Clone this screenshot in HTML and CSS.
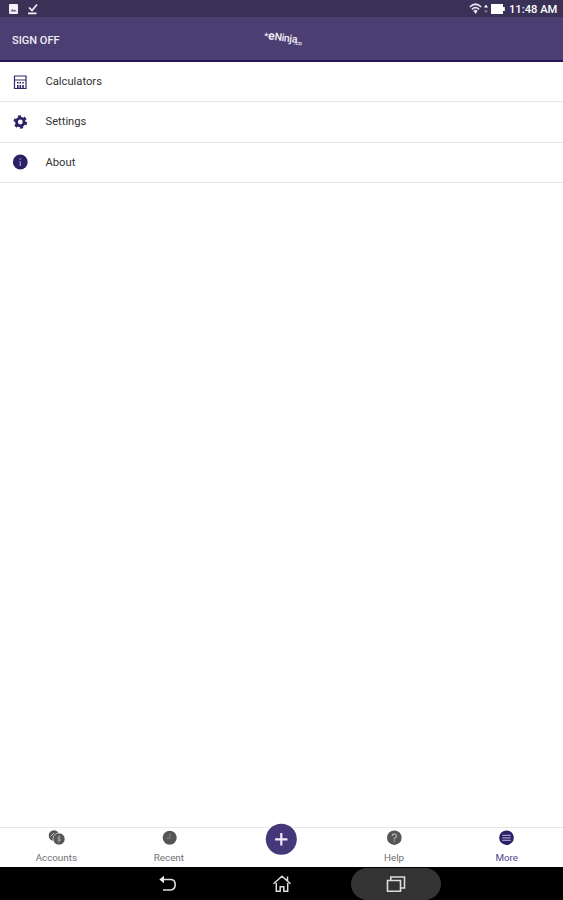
FILE: index.html
```
<!DOCTYPE html>
<html lang="en">
<head>
    <meta charset="UTF-8">
    <meta name="viewport" content="width=device-width, initial-scale=1.0">
    <title>More</title>
    <link rel="stylesheet" href="styles.css">
</head>
<body>
    <div class="status-bar">
        <svg class="status-left" width="30" height="17" viewBox="0 0 30 17">
            <rect x="0" y="4" width="9" height="10" rx="1" fill="#f4f1f8"/>
            <path d="M1.500 11.500l2-2.500 1.500 1.500 1-1 1.800 2z" fill="#6a6088"/>
            <path d="M20 7.500l3 3 5-6M19 13.300h8.500" fill="none" stroke="#f4f1f8" stroke-width="1.700"/>
        </svg>
        <div class="status-right">
            <svg width="37" height="17" viewBox="0 0 37 17">
                <path d="M.8 7Q6.500 1.500 12.200 7M2.900 9.300Q6.500 6 10.100 9.300" fill="none" stroke="#e5e0ee" stroke-width="1.700"/>
                <path d="M4.300 10.700Q6.500 9 8.700 10.700L6.500 14z" fill="#e5e0ee"/>
                <path d="M15 7.500l2-3 2 3z" fill="#fff"/>
                <path d="M15.300 10.500l1.700 2.500 1.700-2.500z" fill="#8d84a5"/>
                <path d="M22 4h12v3h1.800v4H34v3H22z" fill="#fff"/>
            </svg>
            <span class="clock">11:48 AM</span>
        </div>
    </div>

    <header class="header">
        <a class="sign-off">SIGN OFF</a>
        <div class="logo">
            <span class="logo-mark">*</span><span class="logo-e">e</span><span class="logo-name">Ninja</span><span class="logo-small">.co</span>
        </div>
    </header>

    <main class="menu">
        <a class="menu-item">
            <svg width="16" height="16" viewBox="0 0 16 16">
                <path d="M2.500 2h11.500v12.500h-11.500zM2.500 6h11.500" fill="none" stroke="#32286a" stroke-width="1.200"/>
                <path d="M5 8h1.600v1.600H5zM7.500 8h1.600v1.600H7.500zM10.200 8h1.600v1.600h-1.600zM5 11h1.600v3H5zM7.500 11h1.600v3H7.500zM10.200 11h1.600v3h-1.600z" fill="#32286a"/>
            </svg>
            <span>Calculators</span>
        </a>
        <a class="menu-item">
            <svg width="16" height="16" viewBox="0 0 16 16">
                <circle cx="8.300" cy="8" r="3.800" fill="none" stroke="#2c2066" stroke-width="2.800"/>
                <circle cx="8.300" cy="8" r="5.700" fill="none" stroke="#2c2066" stroke-width="2.200" stroke-dasharray="2.980 2.980"/>
            </svg>
            <span>Settings</span>
        </a>
        <a class="menu-item">
            <svg width="16" height="16" viewBox="0 0 16 16">
                <circle cx="8.300" cy="8" r="7.400" fill="#2c2066"/>
                <path d="M8.300 4.300v1.500M8.300 7v5" stroke="#8f88b4" stroke-width="1.400"/>
            </svg>
            <span>About</span>
        </a>
    </main>

    <nav class="tabs">
        <a class="tab">
            <svg width="18" height="16" viewBox="0 0 18 16">
                <circle cx="7" cy="5.500" r="5.300" fill="#555"/>
                <path d="M3.500 6.500L7 3" stroke="#ccc" stroke-width="1"/>
                <circle cx="12" cy="9" r="6" fill="#555" stroke="#fff" stroke-width=".6"/>
                <path d="M12 5.500v7M13.600 7.200Q10.500 6.500 10.700 8.200T13.200 9.800 10.500 11" fill="none" stroke="#aaa" stroke-width=".9"/>
            </svg>
            <span>Accounts</span>
        </a>
        <a class="tab">
            <svg width="16" height="16" viewBox="0 0 16 16">
                <circle cx="8.700" cy="7.700" r="7" fill="#555"/>
                <path d="M8.900 3.800v4.400H5.200" fill="none" stroke="#808080" stroke-width="1.100"/>
            </svg>
            <span>Recent</span>
        </a>
        <a class="tab tab-add">
            <svg width="34" height="34" viewBox="0 0 34 34">
                <circle cx="17" cy="17" r="16.800" fill="#fff"/>
                <circle cx="17.300" cy="17.300" r="15.500" fill="#44377a"/>
                <path d="M17.300 11.100v12.400M11.100 17.300h12.400" stroke="#eeeaf5" stroke-width="2.200"/>
            </svg>
        </a>
        <a class="tab">
            <svg width="16" height="16" viewBox="0 0 16 16">
                <circle cx="8.300" cy="7.700" r="7.300" fill="#555"/>
                <path d="M6.200 6Q6.300 3.900 8.300 3.900T10.500 5.900Q10.500 7 8.300 8.500v1M8.300 10.600v1.300" fill="none" stroke="#b4b4b4" stroke-width="1.200"/>
            </svg>
            <span>Help</span>
        </a>
        <a class="tab active">
            <svg width="16" height="16" viewBox="0 0 16 16">
                <circle cx="7.500" cy="7.700" r="7.300" fill="#2c2069"/>
                <path d="M3.300 5.300h8.400M3.300 7.800h8.400M3.300 10.300h8.400" stroke="#a09ac4" stroke-width="1.300"/>
            </svg>
            <span>More</span>
        </a>
    </nav>

    <footer class="system-nav">
        <div class="system-btn">
            <svg width="20" height="20" viewBox="0 0 20 20">
                <path d="M3 5.500h9.500q4.700 0 4.700 5t-4.700 5.500H5" fill="none" stroke="#ddd" stroke-width="1.600"/>
                <path d="M1.300 5.500L6 1.800v7.400z" fill="#eee"/>
            </svg>
        </div>
        <div class="system-btn">
            <svg width="20" height="20" viewBox="0 0 20 20">
                <path d="M1.500 9.800L10 2.300l8.500 7.500M4.300 9v8.300h3.900v-4.500h3.600v4.500h3.900V9M15.500 7V2.500" fill="none" stroke="#ddd" stroke-width="1.500"/>
            </svg>
        </div>
        <div class="system-btn pressed">
            <svg width="20" height="20" viewBox="0 0 20 20">
                <path d="M1.500 6.500h13v10.700h-13zM4.800 6V3h13.700v11H15" fill="none" stroke="#ddd" stroke-width="1.600"/>
            </svg>
        </div>
    </footer>
</body>
</html>
```
FILE: styles.css
```
* {
    box-sizing: border-box;
}
body {
    margin: 0;
    height: 900px;
    display: flex;
    flex-direction: column;
    font-family: Roboto, Arial, sans-serif;
    background-color: #fff;
    overflow: hidden;
}
svg {
    display: block;
    flex-shrink: 0;
}

/* Status bar */
.status-bar {
    height: 17px;
    padding: 0 5px 0 9px;
    display: flex;
    justify-content: space-between;
    background-color: #3a3157;
    color: #fff;
}
.status-right {
    display: flex;
    gap: 3px;
}
.clock {
    font-size: 11.2px;
    font-weight: 500;
    line-height: 19px;
    width: 49px;
    white-space: nowrap;
}

/* Header */
.header {
    height: 45px;
    padding: 0 12px;
    display: grid;
    grid-template-columns: 1fr auto 1fr;
    align-items: center;
    background-color: #4b3e73;
    border-bottom: 2px solid #271457;
    color: #f0edf5;
}
.sign-off {
    font-size: 11px;
    font-weight: 500;
    padding-top: 4px;
}
.logo {
    display: flex;
    align-items: baseline;
    width: 36px;
    height: 18px;
    margin-top: -4px;
    font-weight: 500;
    line-height: 18px;
    transform: rotate(7deg);
}
.logo-mark {
    font-size: 9px;
    font-weight: 700;
}
.logo-e {
    font-size: 12px;
    font-weight: 700;
}
.logo-name {
    font-size: 10.5px;
    letter-spacing: -0.3px;
}
.logo-small {
    font-size: 6px;
    margin-left: -3px;
    position: relative;
    top: 2px;
}

/* Menu */
.menu {
    flex: 1;
}
.menu-item {
    height: 40.300px;
    padding: 0 12px;
    display: flex;
    align-items: center;
    gap: 17.500px;
    border-bottom: 1px solid #e6e6e6;
    color: #333;
    font-size: 11.200px;
}

/* Bottom tabs */
.tabs {
    height: 40px;
    display: grid;
    grid-template-columns: repeat(5, 1fr);
    border-top: 1px solid #e6e6e6;
}
.tab {
    display: flex;
    flex-direction: column;
    align-items: center;
    padding-top: 2px;
    gap: 5px;
    font-size: 9.800px;
    line-height: 13px;
    color: #707070;
}
.tab.active {
    color: #51478a;
}
.tab-add {
    padding: 0;
    margin-top: -6px;
}

/* System navigation */
.system-nav {
    height: 33px;
    display: flex;
    justify-content: center;
    gap: 24px;
    padding-top: 1px;
    background-color: #000;
}
.system-btn {
    width: 90px;
    height: 32px;
    display: flex;
    align-items: center;
    justify-content: center;
    border-radius: 16px;
}
.system-btn.pressed {
    background-color: #333;
}
```
